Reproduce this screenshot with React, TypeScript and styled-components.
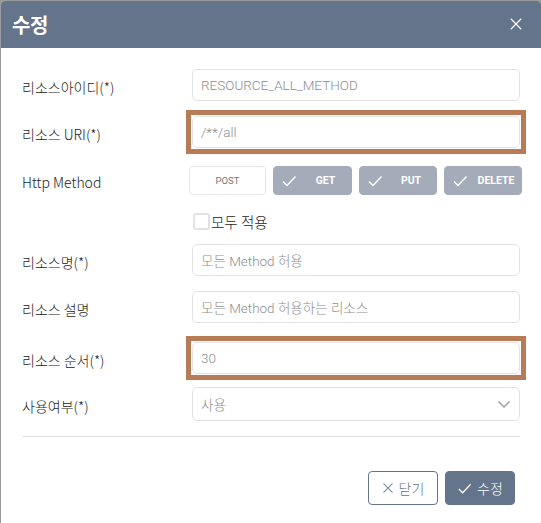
import React from "react";
import styled, { createGlobalStyle } from "styled-components";

const Global = createGlobalStyle`
  html, body { margin: 0; padding: 0; }
  body {
    background: #9b9b9b;
    font-family: Roboto, "Noto Sans CJK KR", sans-serif;
    width: 541px;
    height: 523px;
    overflow: hidden;
  }
`;

const Modal = styled.div`
  margin: 1px 0 0 1px;
  width: 540px;
  height: 522px;
  background: #fff;
  border-top-left-radius: 4px;
  border-top-right-radius: 4px;
  overflow: hidden;
  display: flex;
  flex-direction: column;
`;

const Header = styled.div`
  height: 47px;
  background: #64748b;
  display: flex;
  align-items: center;
  justify-content: space-between;
  padding: 0 16px 0 11px;
  flex-shrink: 0;
`;

const Title = styled.h2`
  margin: 0;
  color: #fff;
  font-family: "Noto Sans CJK KR", sans-serif;
  font-size: 20px;
  font-weight: 700;
  letter-spacing: -0.5px;
`;

const CloseBtn = styled.button`
  border: 0;
  background: none;
  padding: 0;
  width: 16px;
  height: 16px;
  display: flex;
  cursor: pointer;
`;

const Body = styled.div`
  padding: 21px 20px 0 21px;
  display: flex;
  flex-direction: column;
`;

const Row = styled.div<{ $mt?: number }>`
  display: grid;
  grid-template-columns: 170px 328px;
  align-items: center;
  margin-top: ${(p) => p.$mt ?? 0}px;
`;

const Label = styled.label`
  font-family: "Noto Sans CJK KR", sans-serif;
  font-size: 14px;
  font-weight: 300;
  color: #222;
  padding-top: 3px;
`;

const Input = styled.div<{ $hl?: boolean; $h?: number }>`
  box-sizing: border-box;
  height: ${(p) => p.$h ?? 32}px;
  border: 1px solid #e3e3e3;
  border-radius: 5px;
  padding: 0 8px;
  display: flex;
  align-items: center;
  font-family: Roboto, "Noto Sans CJK KR", sans-serif;
  font-size: 13.5px;
  font-weight: 300;
  color: #8e8e8e;
  background: #fff;
  position: relative;

  &::after {
    content: "";
    display: ${(p) => (p.$hl ? "block" : "none")};
    position: absolute;
    top: -7px;
    left: -7px;
    right: -7px;
    bottom: -7px;
    border: 5px solid #b87b57;
    pointer-events: none;
  }
`;

const Chevron = styled.span`
  position: absolute;
  right: 8px;
  top: 50%;
  transform: translateY(-50%);
  display: flex;
`;

const Methods = styled.div`
  display: grid;
  grid-template-columns: 77px 79px 78px 78px;
  column-gap: 7px;
  margin-left: -3px;
`;

const MethodBtn = styled.button<{ $on?: boolean }>`
  box-sizing: border-box;
  height: 29px;
  border-radius: 4px;
  border: 1px solid ${(p) => (p.$on ? "#a3acb8" : "#e6e6e6")};
  background: ${(p) => (p.$on ? "#a3acb8" : "#fff")};
  color: ${(p) => (p.$on ? "#fff" : "#777")};
  font-family: Roboto, sans-serif;
  font-size: ${(p) => (p.$on ? 10.5 : 9.5)}px;
  font-weight: ${(p) => (p.$on ? 700 : 400)};
  display: flex;
  align-items: center;
  justify-content: center;
  position: relative;
  padding: 0 0 0 ${(p) => (p.$on ? 26 : 0)}px;
`;

const CheckIcon = styled.span`
  position: absolute;
  left: 7px;
  top: 50%;
  transform: translateY(-50%);
  display: flex;
`;

const CheckRow = styled.div`
  display: flex;
  align-items: center;
  margin-top: 16px;
  margin-left: 171px;
`;

const Box = styled.span`
  box-sizing: border-box;
  width: 17px;
  height: 17px;
  border: 2px solid #e2e2e2;
  border-radius: 3px;
  background: #fff;
`;

const CheckText = styled.span`
  font-family: "Noto Sans CJK KR", sans-serif;
  font-size: 14.5px;
  font-weight: 300;
  color: #222;
  margin-left: 1px;
`;

const Divider = styled.hr`
  border: 0;
  border-top: 1px solid #e3e3e3;
  margin: 15px 0 0 0;
  width: 498px;
`;

const Footer = styled.div`
  display: flex;
  justify-content: flex-end;
  gap: 7px;
  padding: 34px 26px 0 0;
`;

const FootBtn = styled.button<{ $primary?: boolean }>`
  box-sizing: border-box;
  height: 34px;
  width: 70px;
  border-radius: 4px;
  border: 1px solid #64748b;
  background: ${(p) => (p.$primary ? "#64748b" : "#fff")};
  color: ${(p) => (p.$primary ? "#fff" : "#64748b")};
  font-family: "Noto Sans CJK KR", sans-serif;
  font-size: 14px;
  font-weight: 300;
  display: flex;
  align-items: center;
  justify-content: center;
  gap: 5px;
  padding: 0;
`;

const Check = ({ c = "#fff", s = 16 }: { c?: string; s?: number }) => (
  <svg width={s} height={s} viewBox="0 0 16 16" fill="none">
    <path d="M2 8.5 L6 12.5 L14.5 3.5" stroke={c} strokeWidth="1.4" />
  </svg>
);

const XIcon = ({ c, s }: { c: string; s: number }) => (
  <svg width={s} height={s} viewBox="0 0 16 16" fill="none">
    <path d="M2 2 L14 14 M14 2 L2 14" stroke={c} strokeWidth="1.4" />
  </svg>
);

export default function App() {
  return (
    <>
      <Global />
      <Modal>
        <Header>
          <Title>수정</Title>
          <CloseBtn>
            <XIcon c="#fff" s={14} />
          </CloseBtn>
        </Header>
        <Body>
          <Row>
            <Label>리소스아이디(*)</Label>
            <Input>RESOURCE_ALL_METHOD</Input>
          </Row>
          <Row $mt={15}>
            <Label>리소스 URI(*)</Label>
            <Input $hl>/**/all</Input>
          </Row>
          <Row $mt={18}>
            <Label>Http Method</Label>
            <Methods>
              <MethodBtn>POST</MethodBtn>
              {["GET", "PUT", "DELETE"].map((m) => (
                <MethodBtn key={m} $on>
                  <CheckIcon>
                    <Check />
                  </CheckIcon>
                  {m}
                </MethodBtn>
              ))}
            </Methods>
          </Row>
          <CheckRow>
            <Box />
            <CheckText>모두 적용</CheckText>
          </CheckRow>
          <Row $mt={12}>
            <Label>리소스명(*)</Label>
            <Input>모든 Method 허용</Input>
          </Row>
          <Row $mt={15}>
            <Label>리소스 설명</Label>
            <Input>모든 Method 허용하는 리소스</Input>
          </Row>
          <Row $mt={19}>
            <Label>리소스 순서(*)</Label>
            <Input $hl>30</Input>
          </Row>
          <Row $mt={13}>
            <Label>사용여부(*)</Label>
            <Input $h={34}>
              사용
              <Chevron>
                <svg width="14" height="14" viewBox="0 0 14 14" fill="none">
                  <path d="M1.5 4.5 L7 10 L12.5 4.5" stroke="#999" strokeWidth="1.3" />
                </svg>
              </Chevron>
            </Input>
          </Row>
          <Divider />
        </Body>
        <Footer>
          <FootBtn>
            <XIcon c="#64748b" s={12} />
            닫기
          </FootBtn>
          <FootBtn $primary>
            <Check s={15} />
            수정
          </FootBtn>
        </Footer>
      </Modal>
    </>
  );
}
